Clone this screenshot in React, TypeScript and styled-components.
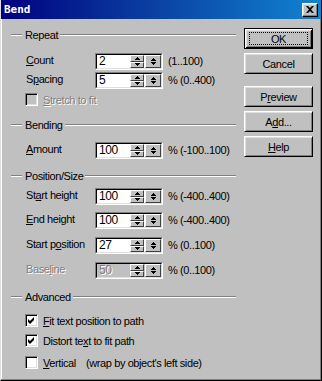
import React, { FC } from 'react';
import styled, { createGlobalStyle, css } from 'styled-components';

const GlobalStyle = createGlobalStyle`
    html, body {
        margin: 0;
        padding: 0;
        background: #c0c0c0;
    }
    body {
        font-family: "Liberation Sans", Arial, sans-serif;
        font-size: 11px;
        letter-spacing: -0.4px;
        color: #000;
    }
`;

const Window = styled.div`
    position: relative;
    width: 322px;
    height: 381px;
    box-sizing: border-box;
    background: #c0c0c0;
    border-left: 1px solid #dfdfdf;
    border-right: 1px solid #000;
    border-bottom: 1px solid #000;
    box-shadow: inset -1px -1px #808080, inset 1px 0 #fff;
    display: flex;
    flex-direction: column;
`;

const TitleBar = styled.div`
    height: 19px;
    display: flex;
    align-items: center;
    justify-content: space-between;
    padding: 0 3px 0 3px;
    background: linear-gradient(90deg, #000080 0%, #0a3da0 45%, #1084d0 100%);
`;

const Title = styled.span`
    font-family: "DejaVu Sans Mono", "Liberation Mono", monospace;
    font-weight: bold;
    font-size: 11px;
    letter-spacing: 0;
    color: #fff;
`;

const CloseButton = styled.div`
    width: 16px;
    height: 14px;
    box-sizing: border-box;
    background: #c0c0c0;
    border: 1px solid;
    border-color: #fff #000 #000 #fff;
    box-shadow: inset -1px -1px #808080, inset 1px 1px #dfdfdf;
    display: flex;
    align-items: center;
    justify-content: center;
`;

const Body = styled.div`
    display: flex;
    padding: 9px 0 0 10px;
`;

const LeftColumn = styled.div`
    width: 225px;
    padding-top: 1px;
    display: flex;
    flex-direction: column;
`;

const RightColumn = styled.div`
    margin-left: 8px;
    display: flex;
    flex-direction: column;
`;

const GroupHeader = styled.div<{ $top?: number }>`
    display: flex;
    align-items: center;
    height: 12px;
    margin-top: ${p => p.$top ?? 0}px;

    &::before,
    &::after {
        content: '';
        height: 0;
        border-top: 1px solid #808080;
        border-bottom: 1px solid #fff;
    }
    &::before {
        width: 11px;
        margin-right: 3px;
    }
    &::after {
        flex: 1;
        margin-left: 2px;
    }
`;

const Row = styled.div<{ $top?: number }>`
    display: flex;
    align-items: center;
    height: 17px;
    padding-left: 15px;
    margin-top: ${p => p.$top ?? 0}px;
`;

const disabledText = css`
    color: #808080;
    text-shadow: 1px 1px #fff;
`;

const Label = styled.span<{ $disabled?: boolean }>`
    width: 69px;
    margin-top: -3px;
    ${p => p.$disabled && disabledText}
`;

const Range = styled.span`
    margin-left: 5px;
    margin-top: -1px;
    white-space: nowrap;
`;

const Spinner = styled.div`
    width: 68px;
    height: 17px;
    box-sizing: border-box;
    border: 1px solid;
    border-color: #808080 #fff #fff #808080;
`;

const SpinnerInner = styled.div<{ $disabled?: boolean }>`
    height: 100%;
    box-sizing: border-box;
    border: 1px solid;
    border-color: #000 #dfdfdf #dfdfdf #000;
    background: ${p => (p.$disabled ? '#c0c0c0' : '#fff')};
    display: flex;
`;

const FieldText = styled.span<{ $disabled?: boolean }>`
    flex: 1;
    padding-left: 2px;
    line-height: 13px;
    font-size: 12px;
    ${p => p.$disabled && disabledText}
`;

const SpinColumn = styled.div`
    width: 14px;
    display: flex;
    flex-direction: column;
`;

const bevel = css`
    box-sizing: border-box;
    background: #c0c0c0;
    border: 1px solid;
    border-color: #fff #404040 #404040 #fff;
    display: flex;
    align-items: center;
    justify-content: center;
`;

const SpinButton = styled.div`
    ${bevel}
    flex: 1;
`;

const DropButton = styled.div`
    ${bevel}
    width: 16px;
    margin-left: 1px;
`;

const CheckRow = styled.div<{ $top?: number }>`
    display: flex;
    align-items: center;
    height: 13px;
    padding-left: 14px;
    margin-top: ${p => p.$top ?? 0}px;
`;

const CheckBox = styled.div<{ $disabled?: boolean }>`
    width: 13px;
    height: 13px;
    box-sizing: border-box;
    border: 1px solid;
    border-color: #808080 #fff #fff #808080;
    box-shadow: inset 1px 1px #000, inset -1px -1px #dfdfdf;
    background: ${p => (p.$disabled ? '#c0c0c0' : '#fff')};
    display: flex;
    align-items: center;
    justify-content: center;
`;

const CheckLabel = styled.span<{ $disabled?: boolean; $width?: number }>`
    margin-left: 5px;
    ${p => p.$width && `width: ${p.$width}px;`}
    ${p => p.$disabled && disabledText}
`;

const Button = styled.div<{ $top?: number; $default?: boolean }>`
    position: relative;
    width: 69px;
    height: 21px;
    box-sizing: border-box;
    margin-top: ${p => p.$top ?? 0}px;
    background: #c0c0c0;
    display: flex;
    align-items: center;
    justify-content: center;
    font-size: 11px;
    ${p =>
        p.$default
            ? css`
                  border: 1px solid #000;
                  box-shadow: inset 1px 1px #fff, inset -1px -1px #000, inset 2px 2px #dfdfdf,
                      inset -2px -2px #808080;
              `
            : css`
                  border: 1px solid;
                  border-color: #fff #000 #000 #fff;
                  box-shadow: inset 1px 1px #dfdfdf, inset -1px -1px #808080;
              `}
`;

const FocusRect = styled.div`
    position: absolute;
    inset: 3px 4px 3px 4px;
    border: 1px dotted #000;
`;

const U = styled.span`
    text-decoration: underline;
`;

const UpArrow = () => (
    <svg width="5" height="3" viewBox="0 0 5 3">
        <path d="M2 0h1v1h1v1h1v1H0V2h1V1h1z" fill="#000" />
    </svg>
);

const DownArrow = () => (
    <svg width="5" height="3" viewBox="0 0 5 3">
        <path d="M0 0h5v1H4v1H3v1H2V2H1V1H0z" fill="#000" />
    </svg>
);

const UpDownGlyph = () => (
    <svg width="7" height="7" viewBox="0 0 7 7">
        <path d="M3 0h1v1h1v1h1v1H1V2h1V1h1z" fill="#000" />
        <path d="M1 4h5v1H5v1H4v1H3V6H2V5H1z" fill="#000" />
    </svg>
);

const CloseGlyph = () => (
    <svg width="8" height="7" viewBox="0 0 8 7">
        <path d="M0 0h2l2 2 2-2h2L5 3.5 8 7H6L4 5 2 7H0l3-3.5z" fill="#000" />
    </svg>
);

const CheckMark = () => (
    <svg width="7" height="7" viewBox="0 0 7 7">
        <path d="M6 0v2L3 5 2 6 0 4V2l2 2z" fill="#000" />
        <path d="M6 1v2L3 6 2 7 0 5V3l2 2z" fill="#000" />
    </svg>
);

type SpinProps = { value: string; disabled?: boolean };

const SpinField: FC<SpinProps> = ({ value, disabled }) => (
    <Spinner>
        <SpinnerInner $disabled={disabled}>
            <FieldText $disabled={disabled}>{value}</FieldText>
            <SpinColumn>
                <SpinButton>
                    <UpArrow />
                </SpinButton>
                <SpinButton>
                    <DownArrow />
                </SpinButton>
            </SpinColumn>
            <DropButton>
                <UpDownGlyph />
            </DropButton>
        </SpinnerInner>
    </Spinner>
);

type FieldRowProps = {
    label: React.ReactNode;
    value: string;
    range: string;
    top?: number;
    disabled?: boolean;
};

const FieldRow: FC<FieldRowProps> = ({ label, value, range, top, disabled }) => (
    <Row $top={top}>
        <Label $disabled={disabled}>{label}</Label>
        <SpinField value={value} disabled={disabled} />
        <Range>{range}</Range>
    </Row>
);

const App: FC = () => {
    return (
        <>
            <GlobalStyle />
            <Window>
                <TitleBar>
                    <Title>Bend</Title>
                    <CloseButton>
                        <CloseGlyph />
                    </CloseButton>
                </TitleBar>

                <Body>
                    <LeftColumn>
                        <GroupHeader>Repeat</GroupHeader>
                        <FieldRow top={12} label={<><U>C</U>ount</>} value="2" range="(1..100)" />
                        <FieldRow top={2} label={<>S<U>p</U>acing</>} value="5" range="% (0..400)" />
                        <CheckRow $top={4}>
                            <CheckBox $disabled />
                            <CheckLabel $disabled><U>S</U>tretch to fit</CheckLabel>
                        </CheckRow>

                        <GroupHeader $top={13}>Bending</GroupHeader>
                        <FieldRow top={11} label={<><U>A</U>mount</>} value="100" range="% (-100..100)" />

                        <GroupHeader $top={11}>Position/Size</GroupHeader>
                        <FieldRow top={6} label={<>St<U>a</U>rt height</>} value="100" range="% (-400..400)" />
                        <FieldRow top={7} label={<><U>E</U>nd height</>} value="100" range="% (-400..400)" />
                        <FieldRow top={8} label={<>Start p<U>o</U>sition</>} value="27" range="% (0..100)" />
                        <FieldRow top={8} label={<>Base<U>l</U>ine</>} value="50" range="% (0..100)" disabled />

                        <GroupHeader $top={12}>Advanced</GroupHeader>
                        <CheckRow $top={11}>
                            <CheckBox>
                                <CheckMark />
                            </CheckBox>
                            <CheckLabel><U>F</U>it text position to path</CheckLabel>
                        </CheckRow>
                        <CheckRow $top={7}>
                            <CheckBox>
                                <CheckMark />
                            </CheckBox>
                            <CheckLabel>Distort te<U>x</U>t to fit path</CheckLabel>
                        </CheckRow>
                        <CheckRow $top={9}>
                            <CheckBox />
                            <CheckLabel $width={43}><U>V</U>ertical</CheckLabel>
                            <span>(wrap by object's left side)</span>
                        </CheckRow>
                    </LeftColumn>

                    <RightColumn>
                        <Button $default>
                            OK
                            <FocusRect />
                        </Button>
                        <Button $top={4}>Cancel</Button>
                        <Button $top={12}>
                            P<U>r</U>eview
                        </Button>
                        <Button $top={4}>
                            A<U>d</U>d...
                        </Button>
                        <Button $top={4}>
                            <U>H</U>elp
                        </Button>
                    </RightColumn>
                </Body>
            </Window>
        </>
    );
};

export default App;
